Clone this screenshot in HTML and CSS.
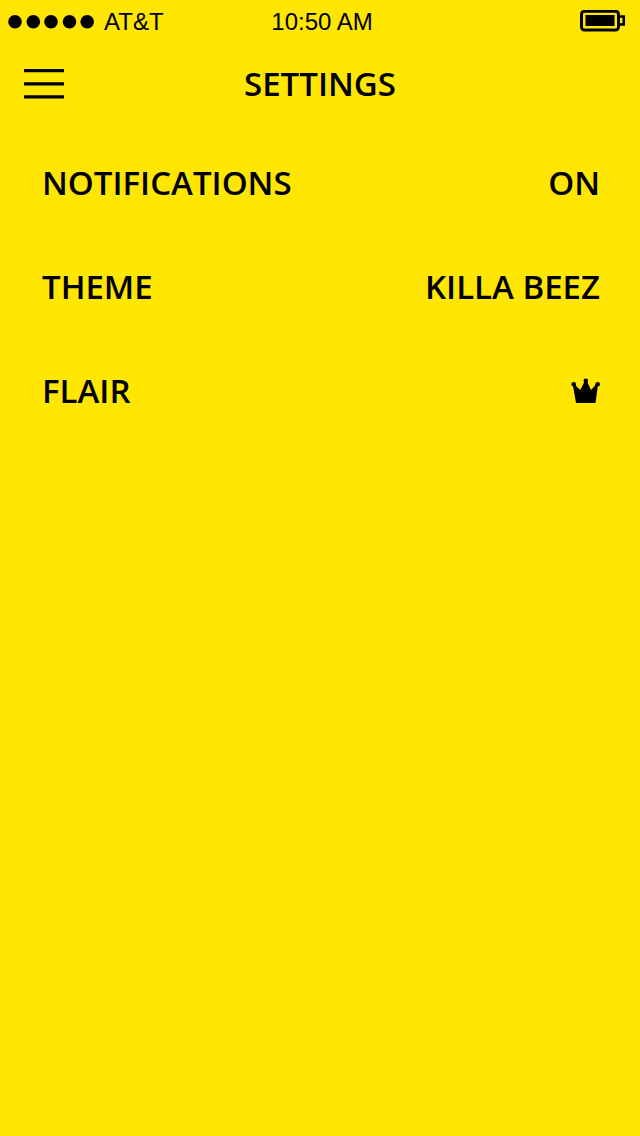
FILE: index.html
```html
<!DOCTYPE html>
<html lang="en">
<head>
<meta charset="utf-8">
<meta name="viewport" content="width=device-width, initial-scale=1">
<title>Settings</title>
<link rel="stylesheet" href="styles.css">
</head>
<body>
<div class="status">
  <div class="carrier">
    <svg class="signal" width="86" height="14" viewBox="0 0 86 14" aria-hidden="true"><circle cx="7" cy="6.8" r="6.8"/><circle cx="25.300" cy="6.8" r="6.8"/><circle cx="43" cy="6.8" r="6.8"/><circle cx="61.500" cy="6.8" r="6.8"/><circle cx="79.200" cy="6.8" r="6.8"/></svg>
    <span>AT&amp;T</span>
  </div>
  <span>10:50 AM</span>
  <svg class="battery" width="46" height="24" viewBox="0 0 46 24" aria-hidden="true"><rect x="1.5" y="1.200" width="37" height="18.800" rx="3" fill="none" stroke="currentColor" stroke-width="3"/><rect x="5.500" y="5" width="29" height="11"/><path d="M39 6.500h4.700v8H39" fill="none" stroke="currentColor" stroke-width="2.600"/></svg>
</div>
<header class="header">
  <button class="menu" type="button" aria-label="Menu"><svg width="40" height="30" viewBox="0 0 40 30" aria-hidden="true"><path d="M0 0h40v3.200H0zM0 13.200h40v3.200H0zM0 26.200h40v3.200H0z"/></svg></button>
  <h1 class="title">SETTINGS</h1>
</header>
<main class="list">
  <button class="row" type="button"><span>NOTIFICATIONS</span><span>ON</span></button>
  <button class="row" type="button"><span>THEME</span><span>KILLA BEEZ</span></button>
  <button class="row" type="button" aria-label="Flair: crown"><span>FLAIR</span>
    <svg width="30" height="26" viewBox="0 0 30 26" aria-hidden="true"><path d="M6 25 2.800 6.500h1.700L10.300 12l4.500-9h2L21 12l5-5.500h2L25.500 25z"/><circle cx="3.700" cy="6.300" r="2.300"/><circle cx="15.800" cy="2.800" r="2.300"/><circle cx="27.700" cy="6.300" r="2.300"/></svg>
  </button>
</main>
</body>
</html>
```
FILE: styles.css
```css
* { box-sizing: border-box; }
body {
  margin: 0;
  min-height: 100vh;
  background: #ffe603;
  color: #000;
  font-family: "Open Sans", "Noto Sans", sans-serif;
}
svg { display: block; fill: currentColor; }
button {
  margin: 0;
  padding: 0;
  border: 0;
  background: none;
  color: inherit;
  font: inherit;
  cursor: pointer;
}
.status {
  display: grid;
  grid-template-columns: 1fr auto 1fr;
  align-items: center;
  height: 44px;
  padding: 0 4px 0 8px;
  font: 24px/28px "Liberation Sans", Arial, sans-serif;
}
.carrier { display: flex; align-items: center; gap: 10px; }
.battery { justify-self: end; margin-right: 10px; }
.header {
  display: grid;
  grid-template-columns: 40px 1fr 40px;
  align-items: center;
  height: 80px;
  padding: 0 24px;
}
.title {
  margin: 0;
  text-align: center;
  font-size: 33px;
  line-height: 44px;
  font-weight: 600;
}
.list { padding: 7px 40px 7px 42px; }
.row {
  display: flex;
  align-items: center;
  justify-content: space-between;
  width: 100%;
  height: 104px;
  font-size: 33px;
  line-height: 44px;
  font-weight: 600;
}
```
